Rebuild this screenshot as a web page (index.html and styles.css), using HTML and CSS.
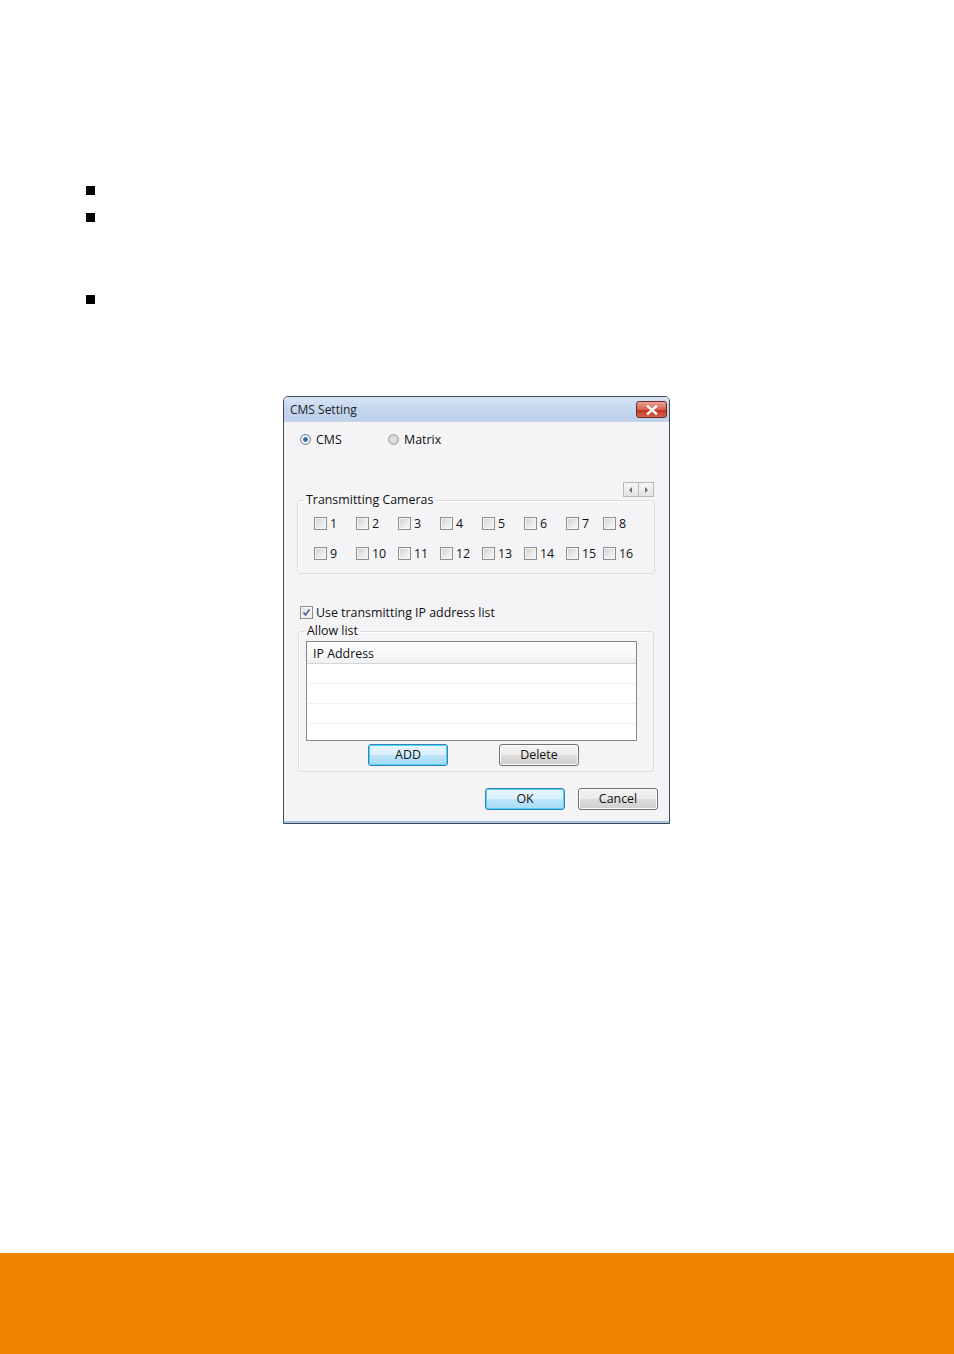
FILE: index.html
```html
<!DOCTYPE html>
<html>
<head>
<meta charset="utf-8">
<link rel="stylesheet" href="styles.css">
</head>
<body>
<div class="page">
  <ul class="bullets">
    <li class="b1"></li>
    <li class="b2"></li>
    <li class="b3"></li>
  </ul>

  <div class="dialog">
    <div class="titlebar">
      <span class="title">CMS Setting</span>
      <span class="close"><svg width="12" height="10" viewBox="0 0 12 10"><path d="M2 1.5 L10 8.5 M10 1.5 L2 8.5" stroke="#fff" stroke-width="2.4" stroke-linecap="square"/></svg></span>
    </div>
    <div class="body">
      <div class="radios">
        <label class="opt opt-cms"><span class="radio on"></span>CMS</label>
        <label class="opt"><span class="radio"></span>Matrix</label>
      </div>
      <div class="spinrow">
        <span class="spin"><span class="sbtn"><svg width="4" height="6" viewBox="0 0 4 6"><path d="M3 0 L0 3 L3 6Z" fill="#6b6b6b"/></svg></span><span class="sbtn"><svg width="4" height="6" viewBox="0 0 4 6"><path d="M1 0 L4 3 L1 6Z" fill="#6b6b6b"/></svg></span></span>
      </div>
      <fieldset class="group cams">
        <legend>Transmitting Cameras</legend>
        <div class="camgrid">
          <label class="cb"><span class="box"></span>1</label>
          <label class="cb"><span class="box"></span>2</label>
          <label class="cb"><span class="box"></span>3</label>
          <label class="cb"><span class="box"></span>4</label>
          <label class="cb"><span class="box"></span>5</label>
          <label class="cb"><span class="box"></span>6</label>
          <label class="cb"><span class="box"></span>7</label>
          <label class="cb"><span class="box"></span>8</label>
          <label class="cb"><span class="box"></span>9</label>
          <label class="cb"><span class="box"></span>10</label>
          <label class="cb"><span class="box"></span>11</label>
          <label class="cb"><span class="box"></span>12</label>
          <label class="cb"><span class="box"></span>13</label>
          <label class="cb"><span class="box"></span>14</label>
          <label class="cb"><span class="box"></span>15</label>
          <label class="cb"><span class="box"></span>16</label>
        </div>
      </fieldset>
      <label class="cb usecb"><span class="box checked"><svg width="9" height="9" viewBox="0 0 9 9"><path d="M1.5 4.5 L3.5 7 L7.5 1.5" stroke="#4a5f9a" stroke-width="1.6" fill="none"/></svg></span>Use transmitting IP address list</label>
      <fieldset class="group allow">
        <legend>Allow list</legend>
        <div class="listbox">
          <div class="lhead">IP Address</div>
          <div class="lrow"></div>
          <div class="lrow"></div>
          <div class="lrow"></div>
          <div class="lrow"></div>
        </div>
        <div class="listbtns">
          <button class="btn def btn-add">ADD</button>
          <button class="btn btn-del">Delete</button>
        </div>
      </fieldset>
      <div class="footbtns">
        <button class="btn def">OK</button>
        <button class="btn">Cancel</button>
      </div>
    </div>
  </div>

  <div class="footer"></div>
</div>
</body>
</html>
```
FILE: styles.css
```css
html, body {
  margin: 0;
  padding: 0;
  background: #fff;
}
.page {
  width: 954px;
  height: 1354px;
  display: flex;
  flex-direction: column;
  font-family: "Open Sans", "Noto Sans", sans-serif;
  font-size: 12.4px;
  color: #111;
}
.bullets {
  list-style: none;
  margin: 0;
  padding: 186px 0 0 86px;
}
.bullets li {
  width: 9px;
  height: 9px;
  background: #000;
}
.b2 { margin-top: 18px; }
.b3 { margin-top: 73px; }

.dialog {
  margin: 92px 0 0 283px;
  width: 385px;
  height: 426px;
  border: 1px solid #3c4a5a;
  border-radius: 5px 5px 0 0;
  background: #f4f4f7;
  display: flex;
  flex-direction: column;
  box-shadow: inset 0 -2px 0 #a9c4e2;
}
.titlebar {
  height: 24px;
  flex: none;
  display: flex;
  align-items: center;
  justify-content: space-between;
  padding: 0 2px 0 6px;
  background: linear-gradient(#d7e4f4, #c5d6ee 50%, #bcd0ea);
  border-radius: 4px 4px 0 0;
  border-bottom: 1px solid #c9d6e6;
}
.title {
  font-size: 12px;
  color: #1e1e1e;
  margin-top: 1px;
}
.close {
  width: 31px;
  height: 17px;
  border: 1px solid #6e2a22;
  border-radius: 3px;
  background: linear-gradient(#e9a59a, #d7604f 50%, #c2331f 55%, #d2644a);
  display: flex;
  align-items: center;
  justify-content: center;
  box-sizing: border-box;
  margin-top: 1px;
}
.body {
  flex: 1;
  display: flex;
  flex-direction: column;
  padding: 0 0 0 13px;
}
.radios {
  display: flex;
  padding: 10px 0 0 3px;
  height: 14px;
  align-items: center;
}
.opt {
  display: flex;
  align-items: center;
}
.opt-cms { width: 88px; }
.radio {
  width: 11px;
  height: 11px;
  border-radius: 50%;
  border: 1px solid #9c9c9c;
  box-sizing: border-box;
  background: radial-gradient(circle, #e8e8e8 0, #d0d0d0 70%);
  margin-right: 5px;
}
.radio.on {
  border-color: #6a7e98;
  background: radial-gradient(circle, #2a5a90 0, #3f79b6 30%, #eef2f6 45%, #dde2ea 100%);
}
.spinrow {
  display: flex;
  justify-content: flex-end;
  padding: 36px 15px 0 0;
  height: 15px;
}
.spin {
  display: flex;
  border: 1px solid #b9b9b9;
  height: 15px;
  box-sizing: border-box;
}
.sbtn {
  width: 14px;
  height: 13px;
  display: flex;
  align-items: center;
  justify-content: center;
  background: linear-gradient(#f6f6f6, #e2e2e2);
}
.sbtn + .sbtn { border-left: 1px solid #b9b9b9; }

.group {
  margin: 0;
  border: 1px solid #dcdcdc;
  border-radius: 3px;
  box-shadow: inset 1px 1px 0 #fff;
}
.group legend {
  padding: 0 2px;
  line-height: 14px;
  color: #111;
}
.cams {
  width: 358px;
  box-sizing: border-box;
  margin-top: -4px;
  padding: 10px 0 0 16px;
  height: 81px;
}
.cams legend { margin-left: -10px; }
.camgrid {
  display: grid;
  grid-template-columns: repeat(6, 42px) 37px auto;
  row-gap: 17px;
}
.cb {
  display: flex;
  align-items: center;
  height: 13px;
}
.box {
  width: 13px;
  height: 13px;
  box-sizing: border-box;
  border: 1px solid #8e8f8f;
  background: linear-gradient(135deg, #cfcfcf, #ececec 60%, #f6f6f6);
  box-shadow: inset 0 0 0 1px #f4f4f4;
  margin-right: 3px;
  flex: none;
  display: flex;
  align-items: center;
  justify-content: center;
}
.box.checked {
  background: linear-gradient(135deg, #e2e2e2, #f6f6f6);
}
.usecb {
  margin: 32px 0 0 3px;
  height: 13px;
}
.allow {
  width: 356px;
  box-sizing: border-box;
  margin: 5px 0 0 1px;
  padding: 3px 0 0 7px;
  height: 148px;
}
.allow legend { margin-left: -1px; }
.listbox {
  width: 331px;
  height: 100px;
  box-sizing: border-box;
  border: 1px solid #828790;
  background: #fff;
  display: flex;
  flex-direction: column;
}
.lhead {
  height: 22px;
  flex: none;
  line-height: 22px;
  padding: 1px 0 0 6px;
  box-sizing: border-box;
  background: linear-gradient(#ffffff, #f7f8f9 50%, #f0f1f3);
  border-bottom: 1px solid #d5d5d5;
}
.lrow {
  height: 20px;
  flex: none;
  box-sizing: border-box;
  border-bottom: 1px solid #f0f0f0;
}
.listbtns {
  display: flex;
  margin-top: 3px;
  padding-left: 62px;
  gap: 51px;
}
.btn {
  width: 80px;
  height: 22px;
  box-sizing: border-box;
  border: 1px solid #707070;
  border-radius: 3px;
  background: linear-gradient(#f3f3f3, #ebebeb 50%, #dddddd 50%, #cfcfcf);
  box-shadow: inset 0 0 0 1px #fcfcfc;
  font-family: "Open Sans", "Noto Sans", sans-serif;
  font-size: 12.4px;
  color: #111;
  padding: 0;
  line-height: 18px;
}
.btn.def {
  border-color: #3c7fb1;
  box-shadow: inset 0 0 0 1px #48d8fb;
  background: linear-gradient(#eaf6fd, #d9f0fc 50%, #bee6fd 50%, #a7d9f5);
}
.footbtns {
  display: flex;
  justify-content: flex-end;
  gap: 13px;
  padding: 16px 11px 0 0;
}
.footer {
  margin-top: auto;
  height: 101px;
  background: #f08300;
}
```
